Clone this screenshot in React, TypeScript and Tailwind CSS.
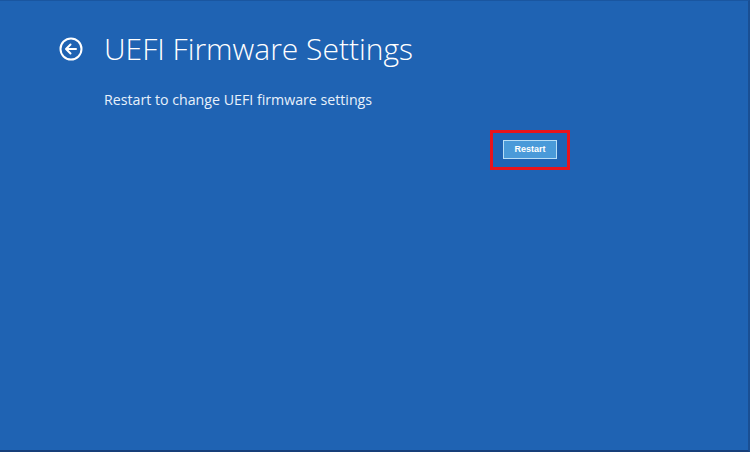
import React from "react";

export default function App() {
  return (
    <div className="w-[750px] h-[452px] bg-[#1f63b3] overflow-hidden border-b-2 border-b-[#173f7a] border-r-2 border-r-[#1a4f93] border-t border-t-[#1a56a0] font-['Open_Sans',sans-serif] text-white">
      <div className="flex items-center pt-[20px] pl-[59px]">
        <svg width="24" height="24" viewBox="0 0 24 24" className="shrink-0">
          <circle cx="12" cy="12" r="10.5" fill="none" stroke="white" strokeWidth="2" />
          <path d="M17 12H7.5M11.5 7.5L7 12l4.5 4.5" fill="none" stroke="white" strokeWidth="2" strokeLinecap="round" strokeLinejoin="round" />
        </svg>
        <h1 className="ml-[21px] text-[30px] font-light leading-[56px] tracking-normal">UEFI Firmware Settings</h1>
      </div>
      <p className="ml-[104px] mt-[13px] text-[14.2px] leading-[20px] font-normal text-[#e8f1fb]">
        Restart to change UEFI firmware settings
      </p>
      <div className="flex mt-[20px] ml-[490px]">
        <div className="w-[80px] h-[40px] border-[3px] border-[#e8131b] flex pl-[10px] pt-[7px]">
          <button className="w-[54px] h-[19px] bg-[#4a9ad9] border border-[#b8def7] text-[9px] font-bold leading-[17px] text-white text-center font-['Liberation_Sans',sans-serif]">
            Restart
          </button>
        </div>
      </div>
    </div>
  );
}
